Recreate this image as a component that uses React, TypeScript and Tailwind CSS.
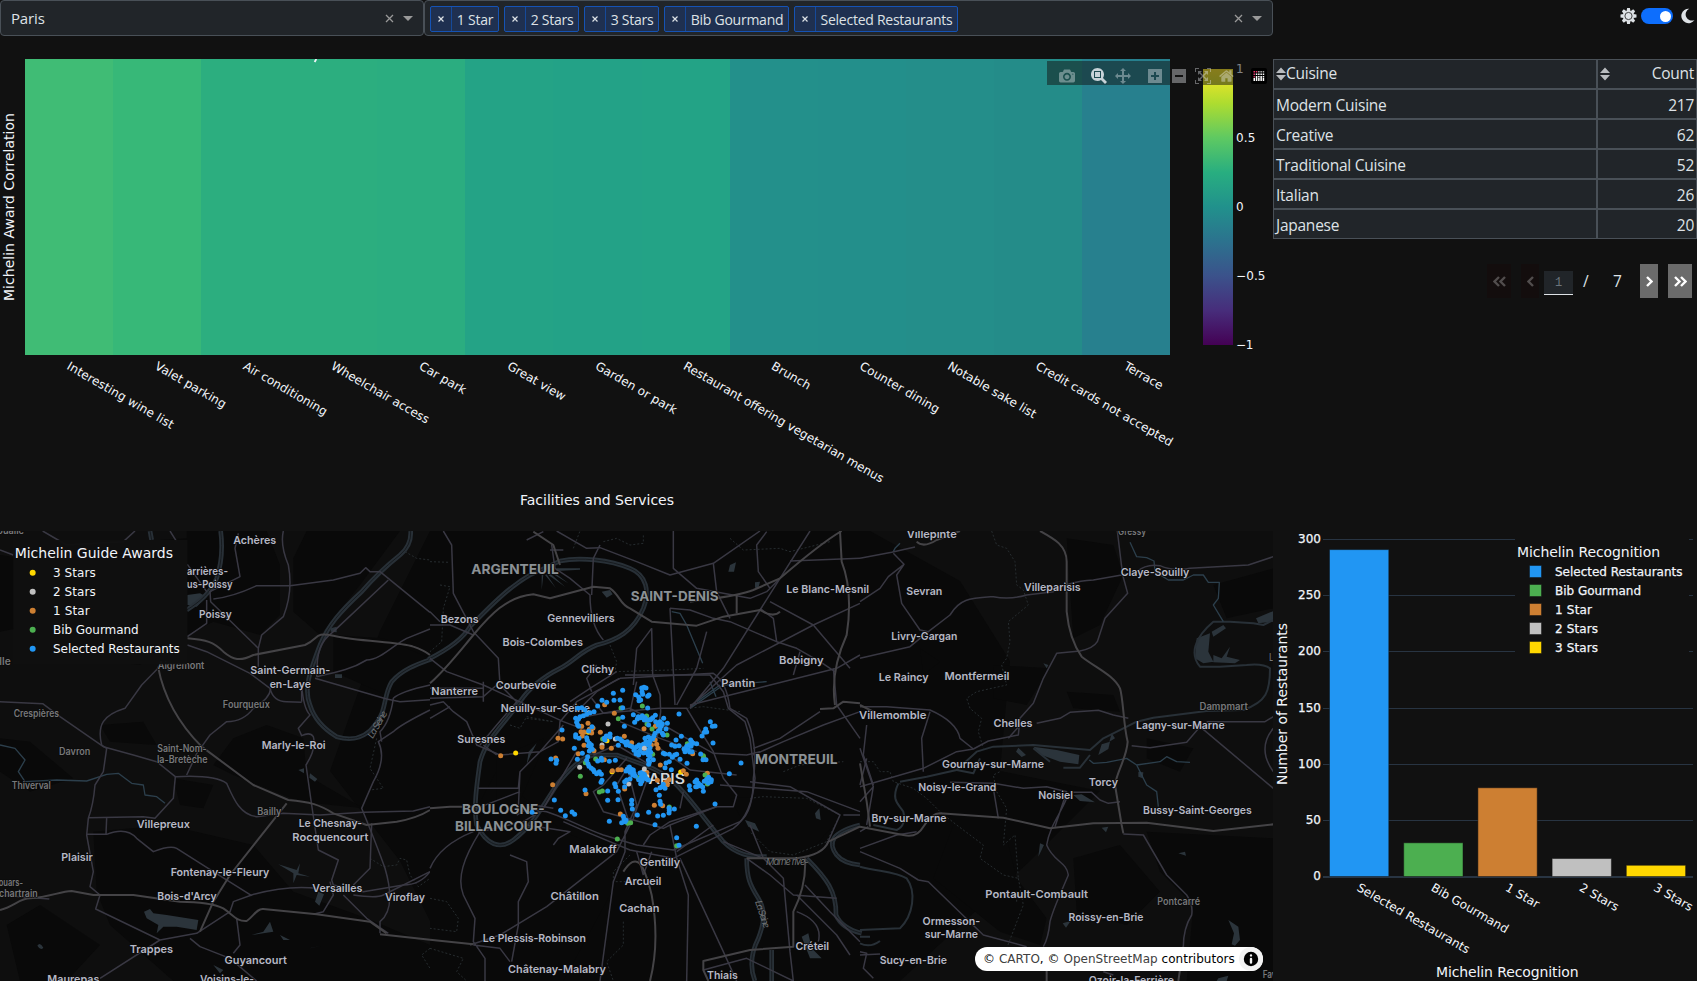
import React from "react";

const SANS = '"DejaVu Sans", Verdana, sans-serif';
const MAPFONT = 'Inter, "Open Sans", sans-serif';

/* ---------- header controls ---------- */

function Caret() {
  return <span className="h-0 w-0 border-x-[5px] border-t-[5px] border-x-transparent border-t-[#999]" />;
}

function ClearMark() {
  return (
    <svg width="9" height="9" viewBox="0 0 9 9" stroke="#999" strokeWidth="1.3">
      <path d="M1 1L8 8M8 1L1 8" />
    </svg>
  );
}

function Tag({ label, width }: { label: string; width: string }) {
  return (
    <div className={`flex h-[26px] shrink-0 rounded-[2px] border border-[#1553b5] bg-[#1f3050] ${width}`}>
      <div className="flex w-[21px] shrink-0 items-center justify-center border-r border-[#164a9a]">
        <svg width="6" height="6" viewBox="0 0 6 6" stroke="#dee2e6" strokeWidth="1.2">
          <path d="M.5 .5L5.5 5.5M5.5 .5L.5 5.5" />
        </svg>
      </div>
      <div className="flex flex-1 items-center justify-center whitespace-nowrap pt-px text-[14px] leading-none tracking-[-0.25px] text-[#dee2e6]">
        {label}
      </div>
    </div>
  );
}

function Header() {
  return (
    <div className="flex h-[36px] w-full">
      <div className="flex w-[424px] items-center rounded-[4px] border border-[#495057] bg-[#212529] px-[10px]">
        <span className="flex-1 text-[15px] tracking-[-0.15px] text-[#dee2e6]">Paris</span>
        <ClearMark />
        <span className="w-[9px]" />
        <Caret />
      </div>
      <div className="flex w-[849px] items-center gap-[5px] rounded-[4px] border border-[#495057] bg-[#212529] pt-[2px] pr-[10px] pl-[5px]">
        <Tag label="1 Star" width="w-[69px]" />
        <Tag label="2 Stars" width="w-[75px]" />
        <Tag label="3 Stars" width="w-[75px]" />
        <Tag label="Bib Gourmand" width="w-[125px]" />
        <Tag label="Selected Restaurants" width="w-[164px]" />
        <span className="flex-1" />
        <div className="flex items-center gap-[9px] pb-[2px]">
          <ClearMark />
          <Caret />
        </div>
      </div>
      <div className="flex flex-1 items-start justify-end pt-2 pr-[2px]">
        <svg width="17" height="16" viewBox="-8.5 -8 17 16" className="mr-1">
          {[0, 45, 90, 135, 180, 225, 270, 315].map((a) => (
            <path key={a} d="M-2 -4.8L-1.4 -8H1.4L2 -4.8Z" fill="#dee2e6" transform={`rotate(${a})`} />
          ))}
          <circle r="5.6" fill="#dee2e6" />
          <circle r="3.6" fill="none" stroke="#333" strokeWidth="0.9" />
        </svg>
        <div className="mr-2 flex h-4 w-8 items-center justify-end rounded-full bg-[#0d6efd] pr-[2.5px]">
          <div className="h-[11px] w-[11px] rounded-full bg-white" />
        </div>
        <svg width="14" height="16" viewBox="0 0 14 16">
          <path d="M8.2 .8A7.2 7.2 0 1 0 13.5 12A6.1 6.1 0 0 1 8.2 .8Z" fill="#dee2e6" />
        </svg>
      </div>
    </div>
  );
}

/* ---------- heatmap ---------- */

const CELLS: [string, string, number][] = [
  ["Interesting wine list", "#40bc75", 121],
  ["Valet parking", "#37b878", 80],
  ["Air conditioning", "#2cae7f", 95],
  ["Wheelchair access", "#2cae7f", 111],
  ["Car park", "#2bad80", 52],
  ["Great view", "#24a386", 65],
  ["Garden or park", "#23a287", 92],
  ["Restaurant offering vegetarian menus", "#23a386", 229],
  ["Brunch", "#23908b", 43],
  ["Counter dining", "#238f8b", 90],
  ["Notable sake list", "#248e8a", 100],
  ["Credit cards not accepted", "#248c89", 156],
  ["Terrace", "#27808e", 43],
];

const FLIP = "matrix(1 0 0 -1 0 850)";
const MODE_ICONS: { x: number; w: number; on?: boolean; d: string }[] = [
  {
    x: 1059,
    w: 1000,
    d: "m500 450c-83 0-150-67-150-150 0-83 67-150 150-150 83 0 150 67 150 150 0 83-67 150-150 150z m400 150h-120c-16 0-34 13-39 29l-31 93c-6 15-23 28-40 28h-340c-16 0-34-13-39-28l-31-94c-6-15-23-28-40-28h-120c-55 0-100-45-100-100v-450c0-55 45-100 100-100h800c55 0 100 45 100 100v450c0 55-45 100-100 100z m-400-550c-138 0-250 112-250 250 0 138 112 250 250 250 138 0 250-112 250-250 0-138-112-250-250-250z m365 380c-19 0-35 16-35 35 0 19 16 35 35 35 19 0 35-16 35-35 0-19-16-35-35-35z",
  },
  {
    x: 1091,
    w: 1000,
    on: true,
    d: "m1000-25l-250 251c40 63 63 138 63 218 0 224-182 406-407 406-224 0-406-182-406-406s183-406 407-406c80 0 155 22 218 62l250-250 125 125z m-812 250l0 438 437 0 0-438-437 0z m62 375l313 0 0-312-313 0 0 312z",
  },
  {
    x: 1115,
    w: 1000,
    d: "m1000 350l-187 188 0-125-250 0 0 250 125 0-188 187-187-187 125 0 0-250-250 0 0 125-188-188 186-187 0 125 252 0 0-250-125 0 187-188 188 188-125 0 0 250 250 0 0-126 187 188z",
  },
  {
    x: 1148,
    w: 875,
    d: "m1 787l0-875 875 0 0 875-875 0z m687-500l-187 0 0-187-125 0 0 187-188 0 0 125 188 0 0 187 125 0 0-187 187 0 0-125z",
  },
  { x: 1172, w: 875, d: "m0 788l0-876 875 0 0 876-875 0z m688-500l-500 0 0 125 500 0 0-125z" },
  {
    x: 1195,
    w: 1000,
    d: "m250 850l-187 0-63 0 0-62 0-188 63 0 0 188 187 0 0 62z m688 0l-188 0 0-62 188 0 0-188 62 0 0 188 0 62-62 0z m-875-938l0 188-63 0 0-188 0-62 63 0 187 0 0 62-187 0z m875 188l0-188-188 0 0-62 188 0 62 0 0 62 0 188-62 0z m-125 188l-1 0-93-94-156 156 156 156 92-93 2 0 0 250-250 0 0-2 93-92-156-156-156 156 94 92 0 2-250 0 0-250 0 0 93 93 157-156-157-156-93 94 0 0 0-250 250 0 0 0-94 93 156 157 156-157-93-93 0 0 250 0 0 250z",
  },
  {
    x: 1219,
    w: 928,
    d: "m786 296v-267q0-15-11-26t-25-10h-214v214h-143v-214h-214q-15 0-25 10t-11 26v267q0 1 0 2t0 2l321 264 321-264q1-1 1-4z m124 39l-34-41q-5-5-12-6h-2q-7 0-12 3l-386 322-386-322q-7-4-13-4-7 2-12 7l-35 41q-4 5-3 13t6 12l401 334q18 15 42 15t43-15l136-114v109q0 8 5 13t13 5h107q8 0 13-5t5-13v-227l122-102q5-5 6-12t-4-13z",
  },
];

const VIRIDIS = ["#fde725", "#addc30", "#5ec962", "#28ae80", "#21918c", "#2c728e", "#3b528b", "#472d7b", "#440154"];

function Heatmap() {
  const cw = 1145 / 13;
  return (
    <svg width="1273" height="472" viewBox="0 59 1273 472" fontFamily={SANS} fill="#f2f5fa" className="block shrink-0">
      <defs>
        <linearGradient id="viridis" x1="0" y1="0" x2="0" y2="1">
          {VIRIDIS.map((c, i) => (
            <stop key={c} offset={i / 8} stopColor={c} />
          ))}
        </linearGradient>
      </defs>
      <g shapeRendering="crispEdges">
        {CELLS.map(([n, c], i) => {
          const x0 = Math.round(25 + i * cw);
          const x1 = Math.round(25 + (i + 1) * cw);
          return <rect key={n} x={x0} y="59" width={x1 - x0} height="296" fill={c} />;
        })}
      </g>
      <path d="M316.3 59L314.6 62" stroke="#f2f5fa" strokeWidth="1.8" />
      {CELLS.map(([n, , w], i) => {
        const x = 66 + i * cw;
        return (
          <text key={n} x={x} y="368.5" fontSize="12" textLength={w} transform={`rotate(30 ${x} 368.5)`}>
            {n}
          </text>
        );
      })}
      <text x="520" y="505" fontSize="14" textLength="154">Facilities and Services</text>
      <text x="0" y="0" fontSize="14" textLength="188" transform="translate(14 301) rotate(-90)">Michelin Award Correlation</text>
      <rect x="1203" y="69" width="30" height="276" fill="url(#viridis)" />
      <g fontSize="12">
        <text x="1236" y="73">1</text>
        <text x="1236" y="142" textLength="19.5">0.5</text>
        <text x="1236" y="211">0</text>
        <text x="1236" y="280" textLength="29.5">−0.5</text>
        <text x="1236" y="349" textLength="17.5">−1</text>
      </g>
      <rect x="1047" y="61" width="223" height="24" fill="#111" fillOpacity="0.5" />
      {MODE_ICONS.map((ic) => (
        <svg key={ic.x} x={ic.x} y="68" width={(ic.w * 16) / 1000} height="16" viewBox={`0 0 ${ic.w} 1000`}>
          <path d={ic.d} transform={FLIP} fill="#f2f5fa" fillOpacity={ic.on ? 0.8 : 0.38} />
        </svg>
      ))}
      <g>
        <rect x="1251" y="68" width="16" height="16" rx="2" fill="#000" />
        {[0, 1, 2, 3, 4].map((i) => (
          <g key={i}>
            <rect x={1253.5 + i * 2.3} y={i % 2 ? 76 : 78} width="1.5" height={i % 2 ? 5 : 3} fill="#fff" />
            <rect x={1253.5 + i * 2.3} y="71" width="1.5" height="1.5" fill={i < 2 ? "#e8386d" : "#aaa"} />
            <rect x={1253.5 + i * 2.3} y="73.5" width="1.5" height="1.5" fill={i < 1 ? "#e8386d" : "#fff"} />
            {i % 2 === 0 && <rect x={1253.5 + i * 2.3} y="76" width="1.5" height="1.5" fill={i < 1 ? "#c9305e" : "#fff"} />}
          </g>
        ))}
      </g>
    </svg>
  );
}

/* ---------- cuisine table ---------- */

const ROWS: [string, number][] = [
  ["Modern Cuisine", 217],
  ["Creative", 62],
  ["Traditional Cuisine", 52],
  ["Italian", 26],
  ["Japanese", 20],
];

function SortIcon() {
  return (
    <svg width="10" height="14" viewBox="0 0 10 14" fill="#b9bcbf" className="shrink-0">
      <path d="M0 6L5 0.5L10 6ZM0 8L5 13.5L10 8Z" />
    </svg>
  );
}

function Chevrons({ double, left }: { double?: boolean; left?: boolean }) {
  return (
    <svg
      width={double ? 13 : 7}
      height="11"
      viewBox={double ? "0 0 13 11" : "0 0 7 11"}
      fill="none"
      stroke="currentColor"
      strokeWidth="2.4"
      className={left ? "-scale-x-100" : ""}
    >
      <path d="M1 1L5.5 5.5L1 10" />
      {double && <path d="M7 1L11.5 5.5L7 10" />}
    </svg>
  );
}

function CuisineTable() {
  const cell = "flex items-center border border-[#495057] bg-[#212529] px-[2px]";
  return (
    <div className="flex w-[424px] flex-col text-[15.5px] leading-none tracking-[-0.25px] text-[#dee2e6]">
      <div className="flex h-[30px]">
        <div className={`${cell} w-[324px]`}>
          <SortIcon />
          <span>Cuisine</span>
        </div>
        <div className={`${cell} w-[100px] justify-between`}>
          <SortIcon />
          <span>Count</span>
        </div>
      </div>
      {ROWS.map(([n, c]) => (
        <div key={n} className="flex h-[30px]">
          <div className={`${cell} w-[324px] pt-[3px]`}>{n}</div>
          <div className={`${cell} w-[100px] justify-end pt-[3px]`}>{c}</div>
        </div>
      ))}
      <div className="mt-[25px] flex h-[34px] items-center justify-end pr-[5px]">
        <div className="flex h-full w-6 items-center justify-center bg-[#130d0d] text-[#514d4d]">
          <Chevrons double left />
        </div>
        <div className="ml-[10px] flex h-full w-[18px] items-center justify-center bg-[#130d0d] text-[#514d4d]">
          <Chevrons left />
        </div>
        <div className="ml-[5px] mt-[4px] flex h-6 w-[29px] items-center justify-center border-b border-[#dee2e6] bg-[#212529] font-mono text-[12px] text-[#6c757d]">
          1
        </div>
        <span className="ml-[10px] w-[6px] pt-[1px]">/</span>
        <span className="ml-[24px] w-[9px] pt-[1px]">7</span>
        <div className="ml-[18px] flex h-full w-[18px] items-center justify-center bg-[#6b6b6b] text-white">
          <Chevrons />
        </div>
        <div className="ml-[10px] flex h-full w-6 items-center justify-center bg-[#6b6b6b] text-white">
          <Chevrons double />
        </div>
      </div>
    </div>
  );
}

/* ---------- map ---------- */

type Label = [string, number, number, number];

// Each tile is drawn on a 3x grid: [text, centre x, baseline y, width]
const TOWNS: Label[][] = [
  [
    ["Achères", 764, 57, 129], ["arrières-", 622, 150, 124], ["us-Poissy", 629, 190, 138], ["Poissy", 646, 279, 98],
    ["Saint-Germain-", 871, 448, 240], ["en-Laye", 871, 488, 124], ["Marly-le-Roi", 881, 672, 192],
    ["Villepreux", 490, 910, 160], ["Le Chesnay-", 991, 907, 190], ["Rocquencourt", 991, 947, 228],
    ["Plaisir", 231, 1009, 95], ["Fontenay-le-Fleury", 660, 1054, 296], ["Bois-d'Arcy", 561, 1126, 178],
    ["Versailles", 1012, 1102, 150], ["Viroflay", 1215, 1128, 120], ["Trappes", 454, 1284, 130],
    ["Guyancourt", 767, 1317, 187], ["Maurepas", 220, 1375, 156], ["Voisins-le-", 681, 1375, 162],
  ],
  [
    ["Bezons", 89, 295, 114], ["Gennevilliers", 453, 292, 202], ["Bois-Colombes", 338, 363, 241], ["Clichy", 503, 444, 98],
    ["Courbevoie", 288, 492, 182], ["Nanterre", 74, 511, 140], ["Neuilly-sur-Seine", 346, 562, 268], ["Suresnes", 154, 654, 144],
    ["Pantin", 925, 485, 102], ["Bobigny", 1114, 418, 134], ["Le Blanc-Mesnil", 1193, 204, 248], ["Malakoff", 489, 984, 142],
    ["Gentilly", 690, 1023, 121], ["Arcueil", 639, 1081, 110], ["Cachan", 628, 1160, 121], ["Châtillon", 434, 1126, 145],
    ["Le Plessis-Robinson", 313, 1250, 309], ["Châtenay-Malabry", 381, 1343, 294], ["Créteil", 1147, 1276, 101], ["Thiais", 877, 1361, 92],
  ],
  [
    ["Villepinte", 215, 38, 150], ["Sevran", 193, 210, 108], ["Villeparisis", 577, 199, 170], ["Claye-Souilly", 885, 154, 206],
    ["Livry-Gargan", 193, 346, 198], ["Le Raincy", 131, 469, 150], ["Montfermeil", 351, 466, 195], ["Villemomble", 98, 581, 202],
    ["Chelles", 459, 605, 117], ["Lagny-sur-Marne", 961, 612, 266], ["Gournay-sur-Marne", 399, 728, 306], ["Noisy-le-Grand", 292, 798, 234],
    ["Noisiel", 587, 821, 104], ["Torcy", 730, 783, 88], ["Bussy-Saint-Georges", 1012, 866, 326], ["Bry-sur-Marne", 147, 890, 225],
    ["Pontault-Combault", 530, 1118, 308], ["Ormesson-", 274, 1200, 173], ["sur-Marne", 274, 1239, 160], ["Roissy-en-Brie", 738, 1188, 225],
    ["Sucy-en-Brie", 160, 1316, 202], ["Ozoir-la-Ferrière", 814, 1376, 256],
  ],
];

const VILLAGES: Label[][] = [
  [
    ["ouaile", 32, 28, 80], ["ville", 2, 421, 60], ["Aigremont", 543, 433, 140], ["Fourqueux", 739, 548, 141], ["Crespières", 109, 576, 136],
    ["Davron", 224, 690, 94], ["Saint-Nom-", 546, 681, 148], ["la-Bretèche", 547, 713, 152], ["Thiverval", 94, 793, 117],
    ["Bailly", 808, 870, 72], ["Jouars-", 26, 1084, 86], ["chartrain", 55, 1116, 116],
  ],
  [],
  [["Gressy", 816, 31, 84], ["Dampmart", 1091, 556, 145], ["Pontcarré", 956, 1140, 128], ["Lesches", 1268, 408, 80], ["Favières", 1258, 1358, 100]],
];

const CITIES: Label[] = [
  ["ARGENTEUIL", 255, 147, 262], ["SAINT-DENIS", 734, 228, 264], ["MONTREUIL", 1099, 716, 248],
  ["BOULOGNE-", 220, 868, 248], ["BILLANCOURT", 220, 918, 290],
];

// Major motorways, local roads, rivers, streams and boundaries per tile
const TILES = [
  {
    major: [
      "M562 340C620 345 640 350 670 380C700 405 720 410 760 390L915 360C960 340 940 320 1000 332C1080 350 1200 350 1240 365Q1270 375 1290 390",
      "M474 425Q500 560 605 665L760 780L865 825C930 830 960 840 1000 865L1100 900L1190 890Q1250 880 1290 855",
      "M860 835L690 1050L640 1130L600 1220",
      "M0 1155C40 1145 60 1120 90 1120C150 1115 180 1100 215 1098L280 1110L400 1110L540 1130C600 1130 640 1135 670 1150C700 1170 710 1190 740 1188C760 1175 770 1150 790 1152L950 1168L1110 1190L1160 1225",
      "M1140 1228L1290 1244",
    ],
    local: [
      "M0 530L128 536L180 575L310 665L400 690L470 710L526 755C620 750 660 760 680 775C700 820 720 870 770 875L850 865L960 870L1090 862L1240 858L1290 845",
      "M474 430L425 480L375 550C310 570 290 600 305 660L320 670L310 740L285 780Q280 840 265 880L260 930L280 1040L270 1085L300 1110L287 1152L480 1245L590 1225L690 1160L700 1130L755 1110Q860 1080 950 1090",
      "M265 878L430 875L465 880L520 820L526 755M320 878L318 928M260 928L320 928Q380 905 410 940L460 980Q510 960 530 970L640 1040L755 1112",
      "M715 25L705 70L720 155L630 200L632 230L775 370L775 425M850 18Q840 60 865 120Q880 200 850 275L785 330L775 370",
      "M640 222Q700 215 770 182L870 182L1000 165L1080 145L1097 128L1110 140L1140 140L1290 262",
      "M128 18L200 60L370 50L405 18M510 18L530 50M0 75L40 90M562 360L620 380L750 445L810 490Q820 530 860 530L905 532",
      "M945 460L1160 522L1200 530L1290 524M950 455C950 380 960 350 1000 320L1165 165M950 455C1020 440 1060 430 1100 405C1140 405 1180 360 1220 340L1290 312",
      "M905 480Q910 550 930 570L895 610L905 632Q930 620 940 635Q950 670 918 720L935 840L955 975L1015 1005L995 1065L1000 1080L1090 1100L1210 1080Q1260 1080 1290 1040",
      "M562 335L620 295L620 225M562 118L620 200M605 665L630 630L680 590Q730 590 760 550Q810 520 812 490M600 665L560 750",
      "M1115 895L1110 1030L1060 1080M990 1070L1000 1110L970 1160L940 1168M1030 1110L1100 1180L1165 1225M1060 1110Q1130 1120 1150 1110L1290 1040M710 1180L720 1260L700 1285M570 1240L600 1265L690 1300L770 1368M480 1245L300 1360",
      "M1290 555Q1200 600 1180 620L1135 650Q1160 700 1120 770L1085 850Q1130 960 1155 1030Q1190 1150 1140 1190L1140 1225",
      "M1290 480Q1200 500 1180 520Q1170 590 1140 620L1145 650M0 1110L60 1115L148 1122M905 480L905 530",
    ],
    river: [
      "M1232 18Q1235 60 1200 90C1150 130 1120 160 1085 200C1020 260 985 300 960 360C930 440 910 490 930 540C945 590 985 620 1010 635C1060 650 1100 635 1125 600C1160 560 1150 510 1175 470C1210 430 1260 415 1295 402",
      "M662 18C670 80 660 130 650 160C630 205 600 230 560 255",
      "M450 18L455 45",
    ],
    stream: ["M0 660L45 670L75 705L55 740L75 770L170 765L260 768L320 748L355 745L395 775L430 780L435 810L470 815L495 835"],
    border: ["M1215 80L1250 100L1290 105M1130 640L1110 730L1150 790L1110 795M1110 1000L1150 1025L1190 1020L1200 1000L1220 1005L1230 1050L1255 1085L1290 1060M1290 1270L1265 1290L1290 1330"],
    lake: [
      "M432 1160L450 1152L460 1165L500 1170L595 1185L590 1215L530 1205L490 1205L470 1225L475 1200L440 1180Z",
      "M835 1018L890 1035L900 1015L895 1045L930 1055L890 1050L880 1075L880 1045Z",
      "M955 1100L972 1108L958 1142L945 1130ZM755 1230L790 1220L810 1190L820 1220L790 1225ZM640 1320L670 1335L660 1345ZM895 735L912 730L912 745ZM930 745L952 762L945 770L928 758ZM840 1230L870 1245L850 1245ZM930 1270L965 1262L935 1268ZM562 210L600 205L620 215L590 245L562 240ZM1005 448H1026V459H1005ZM992 310L1010 305V322L992 320ZM112 1262Q120 1250 130 1268Q122 1278 112 1262Z",
    ],
    green: [
      "M0 90L70 100L200 60L400 50L560 40L560 18L800 18L840 120L840 270L780 330L640 290L540 340L420 420L240 400L100 300L0 320Z",
      "M700 640L800 600L910 640L920 750L1090 850L900 830L700 750L640 720ZM920 18H1200L1080 180L960 330L880 260L880 100Z",
      "M1000 330L1150 340L1290 400L1160 510L1000 440Z",
      "M280 920L500 900L760 960L880 1100L1100 1180L1290 1260V1368H520L330 1200L290 1100ZM120 1140L300 1260L200 1368H60L20 1200Z",
      "M300 600L430 590L470 660L330 650ZM0 640L90 650L220 760L90 800L0 740ZM520 760L640 780L610 850L540 840Z",
    ],
  },
  {
    major: [
      "M0 475C50 430 80 390 130 330C180 270 230 215 310 208L360 220L490 185L540 190C570 210 570 240 600 250L665 290L800 302L880 275L990 255Q1030 280 1050 260",
      "M310 20L370 60L390 120M780 230C850 220 920 215 970 195L1050 160C1120 100 1180 50 1235 18M1230 18L1235 110Q1270 200 1250 330Q1200 440 1215 540M0 850L60 845L150 845",
      "M0 1244L130 1258M580 1040C620 980 640 1010 665 1110Q690 1250 660 1368M1290 535L1240 530L1210 550L1170 552M1125 1000Q1130 1080 1090 1160V1265L960 1275L820 1308L820 1335L835 1368M920 210V265",
      "M950 1000H1100Q1180 990 1195 950L1290 905",
    ],
    local: [
      "M570 460L850 445Q890 470 900 550L950 580Q985 660 970 760Q970 860 930 890L730 975L620 960L520 930C440 900 400 875 350 860L280 850M570 460L440 530L390 590L385 650L330 680",
      "M568 460L550 470L500 500L440 560M585 450H840L880 500L895 550L945 590L960 640L975 760Q965 870 910 910L730 1000L600 975L480 925L400 890",
      "M485 520L520 565L690 550L770 550L800 600L850 680L880 760L920 810L910 845L860 845L720 900L700 910L520 860L490 800L520 780L590 700",
      "M440 580L600 550L700 600L770 640L850 685L950 690L990 680M570 590L690 640L800 680M620 470L600 560M665 310L668 450L690 510L692 560L680 650M720 250L730 440L735 540",
      "M40 18L65 60L70 205L130 320L205 400L210 480L260 530L200 600L150 660M0 300L60 300L130 330M0 400L50 440L160 480L280 535L400 590L480 620",
      "M365 60L375 130L420 160L480 210Q480 300 520 345M510 60L490 100L485 210M380 18L470 70L510 68L620 110L720 150L850 115L990 18M730 18V130L800 190L960 220L1010 200L1050 160L1140 18",
      "M720 250L780 255L850 280L900 290L1040 350L1100 370L1170 410L1215 440M780 550L880 430L1050 160M780 545L920 420L1150 300L1290 235M780 540L1000 485L1220 430L1290 390",
      "M850 115L860 200L900 280M1010 20L980 60L985 140L1020 190M1290 100L1080 108M1020 230L1150 300L1260 430M990 250L1030 280L1040 350M1110 380L1090 450",
      "M0 540L40 530L70 560L110 590L140 660L210 690L330 680L400 600M0 520L160 515L200 480M330 680L270 740L265 790L145 790M270 740L265 850M140 850L270 800",
      "M490 690L560 660L660 720M590 720L620 840L585 920L585 980L550 1070L510 1368M660 740L610 880L560 980L350 1145L210 1230L120 1260",
      "M720 900L740 1000L775 1110L770 1368M750 1000L880 1280L920 1368M665 980L640 1050M620 980L640 1050",
      "M150 920C100 1000 80 1060 100 1110L135 1180L130 1250L165 1300V1368M130 1260L210 1270L240 1310M240 990L290 1010L295 1070L265 1130V1200L245 1310M0 1030Q30 960 130 920",
      "M290 900L420 920L385 940L370 960M370 850L310 840L260 870M150 920L280 890L330 860M0 490H160M160 470L160 530",
      "M950 1000L1020 1050L1090 1110L1220 1120M1000 1000L1060 1060L1080 1280L1090 1368M1100 1110L1220 1230L1260 1290M1125 1080L1200 1160L1290 1250M1100 1160Q1180 1190 1165 1250M820 1335L950 1300L1090 1368",
      "M870 780L1130 800L1290 860M960 770L1080 785L1230 870L1190 960M970 670L1050 640L1170 560M1210 430L1220 540L1290 640M970 690L1060 650L1180 600L1290 560M960 900L1000 1000L880 950M1240 870L1290 870",
      "M610 480L620 370L665 310M485 500L470 460L500 420M560 440L480 490L420 530M830 320L800 430L740 540M750 850L760 800M0 580L60 545M160 660L200 690M440 680L340 850",
      "M585 740L560 780L600 900M640 960L660 930L720 890L860 845M850 900L740 980M920 750L780 735L660 650",
      "M290 45L340 20M360 75L400 75M0 260L30 290",
    ],
    river: [
      "M-5 403C60 370 100 340 120 305C170 255 230 190 300 150L390 108C450 95 540 105 600 130C650 150 660 200 640 250C610 320 560 345 500 360C450 380 430 410 390 430C330 460 290 500 270 530C220 600 170 640 150 710C140 780 130 850 140 900C170 960 210 975 250 945C310 900 340 840 380 780C420 730 450 700 490 690L560 690C640 720 690 730 740 780C780 820 830 890 880 950C920 990 960 995 1010 995",
      "M950 1000C950 1060 960 1080 985 1120C1010 1160 1000 1200 985 1240C960 1290 960 1330 975 1368M1025 1275V1368",
      "M1130 1000C1190 1060 1220 1100 1218 1170Q1235 1210 1295 1225M1290 900C1210 920 1190 950 1220 990Q1240 1015 1290 1020",
    ],
    stream: ["M725 260L750 265L770 300L818 415M780 550L880 480L1010 470M840 470L858 515M870 480L800 530"],
    border: [
      "M0 110L60 112M30 180L60 185L40 250L35 350L0 380M430 70L450 18M520 50L560 40L600 60L640 55V30M900 40L940 75L1050 70L1080 80L1200 50M540 360L560 410L555 440L720 435L820 430",
      "M960 820L1000 815L1130 820L1230 870L1190 950L1090 990L1020 980L960 920M1060 740L1110 720L1240 710M0 1120L50 1130L85 1180L80 1220L0 1210M580 1190V1260L530 1310L550 1368M600 990L550 1040V1070H620M0 1270L100 1300L80 1340L110 1368M290 580L370 590L290 575L270 610L240 600M770 550L820 545L930 560",
    ],
    lake: [
      "M515 200L540 195L548 208L530 218ZM895 140L900 120L918 112L912 140ZM975 172L990 170L985 190L975 188ZM1155 865L1168 850L1172 885L1158 880ZM945 885L975 895L988 920L955 905ZM290 718L296 680L320 655L302 690ZM1115 1235L1135 1225L1145 1270L1175 1300L1140 1300ZM335 150V195L340 150ZM345 150L378 190L350 148ZM355 150L405 185L360 145ZM365 145L415 175L370 140ZM380 130L450 130V134L380 138Z",
    ],
    green: [
      "M0 850L140 850L220 700L240 780L400 920L600 1000L400 1368H0Z",
      "M200 700L340 640L330 690L260 850L200 850ZM900 820L1160 810L1230 880L1130 990L990 980Z",
    ],
  },
  {
    major: [
      "M540 18C580 40 620 60 620 110V260C625 310 640 360 665 395C710 430 760 450 780 490C790 520 790 600 803 650C800 700 770 740 765 780L785 900L790 925",
      "M170 50Q190 70 230 45L300 18M0 905L130 930Q170 940 190 905Q215 865 240 865L430 878L570 910L700 895L860 893L1060 918L1240 898M0 715L20 830L30 905M0 540L40 560",
      "M560 1310V1368M970 1265L955 1368",
    ],
    local: [
      "M0 100L95 82L165 66M205 320L270 270C300 220 330 220 400 215Q450 225 500 210L580 200Q620 170 700 165L785 150L830 140Q860 115 900 122Q940 140 990 130L1165 120L1240 95",
      "M0 400L150 365L205 320L180 315L125 235L110 150L132 118L100 85M0 230L60 190L85 155L132 118M772 18L788 150L803 205L735 280L712 350Q700 370 660 378L590 385L550 460L520 535L480 580L475 630L385 648L340 672L290 680L190 730L0 785",
      "M0 545L80 545L210 555Q290 590 300 640L340 672M530 595L600 580L630 562L715 556L760 570L805 580M210 560L185 640L190 740M1040 590L1215 590L1240 575M815 662L870 668L980 652L1020 605L1240 790",
      "M270 772L400 775L490 790L560 785L620 800L585 905M620 820C600 870 570 900 560 960C580 1010 620 1010 625 1050C600 1110 580 1150 570 1190Q565 1240 550 1265M400 790L415 880M0 970L110 930L170 920M640 802L695 802L720 825L745 835L780 830",
      "M0 980L120 1030L175 1065L205 1070L370 1230L500 1265M790 927L850 930L920 1050L980 1110Q1000 1140 995 1170Q970 1210 970 1265M0 670L40 785L20 900M0 830L40 785M445 640L480 600M1240 610Q1190 670 1240 740",
      "M0 1280L20 1285L10 1330L40 1360M730 1340L760 1350M0 1290L60 1287",
      "M20 600L10 690L40 780M0 780L20 700M25 905L0 920",
    ],
    river: [
      "M120 770L200 755L290 735L350 680L400 665L520 660L690 675L730 640L790 610L830 590L880 578L1040 558L1150 555C1220 530 1230 500 1230 430Q1210 415 1160 420L1080 425L1020 425C990 390 1000 340 1060 290L1110 290L1180 295L1210 300L1240 285",
      "M115 775C90 830 120 840 130 860Q140 900 110 915L40 900M0 1025C60 1040 110 1040 140 1060C170 1100 160 1170 120 1210L0 1215M0 1235H30M0 1255Q30 1270 60 1248",
      "M290 735L340 745L360 700M520 670L570 710M610 728H660L690 690",
    ],
    stream: ["M810 52L830 95L860 98L882 108L885 140L925 165L970 165L1000 150L1030 150L1045 172L1078 172L1075 220L1060 240L1090 290M688 705L700 715L740 712L800 700L830 720L900 710L920 695L950 710L990 712M830 720L860 780L890 800L895 845M100 80L105 70L120 55"],
    border: [
      "M395 18L410 60L440 70L465 110L470 180L490 195L505 240L445 290L450 350L440 400L425 420L440 480L350 500L320 520L330 550L365 580L355 620L370 670M0 710L40 710L60 740L90 740L100 770L160 790L200 820L240 860L290 900L370 960L360 1000L430 1050L475 1060L465 930L430 960L440 850L410 800L400 750L420 740M475 1060L490 1140L440 1270M470 1100V1130",
    ],
    lake: [
      "M1010 340L1050 325L1045 380L1060 410L1030 415L1005 400ZM1060 390L1085 400L1110 365L1100 395L1140 405L1125 415L1060 412ZM1055 320L1090 300L1098 310L1060 335ZM1188 280L1240 258V290L1195 295Z",
      "M520 665L590 675L658 690L655 718L600 710L545 690ZM475 668L498 690L485 696L468 680ZM715 690L725 658L750 650L745 672ZM748 650L755 625L765 640ZM640 810L665 808L705 832L660 828ZM725 908L745 905L738 922ZM835 740L850 742L848 760L835 755ZM535 995L540 955L552 960ZM955 985L975 980L978 992ZM608 1195L632 1188L618 1208ZM1105 1185L1135 1205L1140 1245L1125 1262L1115 1258L1122 1225ZM550 415L565 420L560 430ZM1075 1360L1105 1352L1100 1368H1070Z",
    ],
    green: [
      "M180 370L240 410L190 450ZM620 40L760 60L790 150L720 300L640 340ZM400 420L570 430L500 540L400 520ZM860 640L1000 670L960 740L860 700ZM860 920L1240 940V1368H980L1000 1140L900 1040ZM620 500L760 510L780 560L640 550ZM1060 180L1240 130V250L1100 280Z",
      "M280 900L430 900L470 1060L560 1180L540 1260L420 1220L220 1060ZM640 1000L780 960L900 1100L800 1200L650 1160Z",
    ],
  },
];

const pts = (s: string) => s.trim().split(/\s+/).map((p) => p.split(",").map(Number));

const DOTS: [string, string][] = [
  ["#ffd700", "257,684 531,647 475,622 752,741 546,740"],
  ["#c0c0c0", "534,597 483,615 556,642 516,660 449,727 596,777"],
  [
    "#cd7f32",
    "524,539 553,565 474,595 455,604 489,609 478,613 485,624 462,622 457,633 453,620 384,640 398,642 462,661 445,686 377,699 212,692 511,622 583,634 516,667 544,670 605,653 598,658 492,677 675,645 680,658 684,670 676,604 642,611 664,660 788,686 691,720 547,737 564,734 574,734 523,704 368,779 468,806 584,792 571,867 673,841 698,842 717,764 708,772 712,779 682,766 760,737 769,748 832,745 650,742",
  ],
  [
    "#4caf50",
    "573,549 565,581 637,543 650,573 651,597 666,612 711,630 772,656 820,692 821,697 466,713 497,702 451,754 508,801 517,798 718,846 593,895 602,893 562,942 740,962 825,750 832,777 668,688 624,758 518,642",
  ],
  [
    "#2196f3",
    "578,496 550,505 552,526 570,525 516,526 530,532 503,543 455,548 444,550 465,555 492,560 480,563 470,568 460,572 450,575 445,583 437,580 440,592 443,600 446,604 578,548 578,577 583,604 642,487 648,489 635,489 636,500 638,508 617,509 657,510 653,514 626,516 632,525 627,527 653,549 747,567 610,569 625,575 632,578 637,572 643,585 622,582 614,592 645,578 652,585 660,585 676,571 668,578 663,583 701,580 690,590 712,595 697,596 685,600 677,590 708,612 694,603 690,612 685,618 697,625 700,630 656,600 841,590 855,603 847,604 827,612 823,622 830,621 816,633 754,634 849,654 396,615 486,605 476,618 437,629 437,636 447,640 470,638 472,646 478,655 484,660 482,668 475,662 487,673 478,678 433,670 457,685 363,702 380,706 378,715 442,703 523,640 529,633 525,645 540,627 540,636 562,640 570,642 575,647 565,661 584,652 592,650 589,660 600,662 607,665 613,672 620,665 627,660 633,668 625,680 618,686 630,678 640,684 626,690 612,676 645,640 655,636 662,640 672,633 668,642 660,648 648,650 650,660 658,655 640,658 660,668 655,675 650,683 662,682 655,690 660,695 655,705 658,712 656,718 670,704 675,625 738,645 725,660 735,664 747,662 762,672 765,680 770,664 778,660 785,650 782,645 790,655 800,656 783,664 775,675 786,680 779,681 767,675 700,685 705,687 718,688 734,690 740,688 727,697 750,703 708,714 718,710 705,728 724,734 771,715 812,687 819,704 828,704 933,714 898,746 800,765 795,770 805,775 812,780 800,785 818,786 820,799 797,785 778,782 780,795 823,769 830,763 836,757 844,764 843,770 835,774 808,782 470,706 474,716 477,724 484,730 490,734 493,740 500,746 508,740 514,748 513,772 516,766 503,708 516,706 538,709 556,706 514,700 473,695 598,726 604,733 592,732 588,738 610,735 600,742 612,745 608,750 616,753 630,744 637,742 643,748 634,755 640,760 650,762 645,755 655,765 626,764 636,768 632,776 554,776 557,785 565,799 584,770 590,765 584,785 600,762 678,794 688,811 696,785 700,778 690,788 705,790 465,795 533,798 533,826 564,824 373,825 392,856 406,872 426,861 434,868 605,826 605,838 607,852 622,870 538,889 575,893 582,882 588,886 580,874 585,890 690,829 692,838 656,862 683,873 700,871 717,849 718,856 717,864 733,852 675,899 855,837 799,904 740,938 747,961 306,862",
  ],
  ["#c0c0c0", "643,670 643,732"],
];

const LEGEND: [string, string, number][] = [
  ["3 Stars", "#ffd700", 128],
  ["2 Stars", "#c0c0c0", 128],
  ["1 Star", "#cd7f32", 110],
  ["Bib Gourmand", "#4caf50", 257],
  ["Selected Restaurants", "#2196f3", 380],
];

function MapTexts({ items, size, fill, weight = 600 }: { items: Label[]; size: number; fill: string; weight?: number }) {
  return (
    <g
      fontFamily={MAPFONT}
      fontSize={size}
      fontWeight={weight}
      fill={fill}
      textAnchor="middle"
      stroke="#0b0b0b"
      strokeWidth="5"
      strokeLinejoin="round"
      paintOrder="stroke"
    >
      {items.map(([t, x, y, w]) => (
        <text key={t} x={x} y={y} textLength={w} lengthAdjust="spacingAndGlyphs">
          {t}
        </text>
      ))}
    </g>
  );
}

function ParisMap() {
  return (
    <div className="relative h-[450px] w-[1273px] shrink-0 overflow-hidden bg-[#0e0e0e]">
      <svg width="1273" height="450" viewBox="0 0 1273 450" className="block">
        <path
          d="M430 0H870L960 50L1010 130L1000 240L1100 260L1030 330L900 450H460L400 330L330 240L380 100Z"
          fill="#090909"
        />
        {TILES.map((t, i) => (
          <g key={i} transform={`translate(${i * 430} -6) scale(${1 / 3})`} fill="none" strokeLinejoin="round">
            {t.green.map((d) => <path key={d} d={d} fill="#090909" />)}
            {t.lake.map((d) => <path key={d} d={d} fill="#2b343b" />)}
            {t.river.map((d) => <path key={d} d={d} stroke="#283037" strokeWidth={i === 2 ? 6 : 14} />)}
            {i < 2 && t.river.map((d) => <path key={d + "i"} d={d} stroke="#171b1f" strokeWidth="3" />)}
            {t.stream.map((d) => <path key={d} d={d} stroke="#2c3f4c" strokeWidth="4" />)}
            {t.border.map((d) => <path key={d} d={d} stroke="#262c2f" strokeWidth="3" strokeDasharray="6 6" />)}
            {t.local.map((d) => <path key={d} d={d} stroke="#393843" strokeWidth="4.5" />)}
            {t.major.map((d) => <path key={d} d={d} stroke="#444346" strokeWidth="6" />)}
          </g>
        ))}
        {TILES.map((_, i) => (
          <g key={i} transform={`translate(${i * 430} -6) scale(${1 / 3})`}>
            <MapTexts items={VILLAGES[i]} size={29} fill="#77787a" />
            <MapTexts items={TOWNS[i]} size={33} fill="#b6b8c5" />
          </g>
        ))}
        <g transform={`translate(430 -6) scale(${1 / 3})`}>
          <MapTexts items={CITIES} size={41} fill="#8b9195" weight={700} />
          <MapTexts items={[["PARIS", 697, 777, 136]]} size={42} fill="#d5d8da" />
          <g fontFamily={MAPFONT} fontSize="28" fontStyle="italic" fill="#6f7275">
            <text transform="translate(975 1130) rotate(72)" textLength="86">La Seine</text>
            <text x="1008" y="1021" textLength="128">Marne rive-</text>
            <text transform="translate(-172 642) rotate(-60)" textLength="90">La Seine</text>
          </g>
          {DOTS.map(([c, s], k) => (
            <g key={k} fill={c}>
              {pts(s).map(([x, y], j) => (
                <circle key={j} cx={x} cy={y} r="7.5" />
              ))}
            </g>
          ))}
        </g>
        <g transform={`translate(0 -6) scale(${1 / 3})`} fontFamily={SANS} fill="#f2f5fa">
          <rect x="40" y="45" width="522" height="373" fill="#101010" fillOpacity="0.96" />
          <text x="44" y="98" fontSize="42" textLength="475">Michelin Guide Awards</text>
          {LEGEND.map(([t, c, w], i) => (
            <g key={t}>
              <circle cx="98" cy={143.5 + i * 57} r="9" fill={c} />
              <text x="159" y={155 + i * 57} fontSize="36" textLength={w}>
                {t}
              </text>
            </g>
          ))}
        </g>
      </svg>
      <div className="absolute top-[416px] left-[975px] flex h-6 w-[288px] items-center justify-between rounded-full bg-white pl-2 [font-family:'DejaVu_Sans',Verdana,sans-serif] text-[12px] text-black">
        <span className="whitespace-nowrap tracking-[0.03px]">
          © <span className="text-[#404040]">CARTO</span>, © <span className="text-[#404040]">OpenStreetMap</span> contributors
        </span>
        <span className="flex h-6 w-6 shrink-0 items-center justify-center rounded-full bg-[#f2f2f2]">
          <svg width="24" height="24" viewBox="0 0 20 20" fillRule="evenodd">
            <path d="M4 10a6 6 0 1 0 12 0 6 6 0 1 0-12 0m5-3a1 1 0 1 0 2 0 1 1 0 1 0-2 0m0 3a1 1 0 1 1 2 0v3a1 1 0 1 1-2 0" />
          </svg>
        </span>
      </div>
    </div>
  );
}

/* ---------- bar chart ---------- */

const BARS: [string, string, number, number][] = [
  ["Selected Restaurants", "#2196f3", 291, 128],
  ["Bib Gourmand", "#4caf50", 30, 87],
  ["1 Star", "#cd7f32", 79, 37],
  ["2 Stars", "#c0c0c0", 16, 43],
  ["3 Stars", "#ffd700", 10, 43],
];

function BarChart() {
  const y = (v: number) => 876.5 - (v * 337) / 300;
  return (
    <svg width="424" height="450" viewBox="1273 531 424 450" fontFamily={SANS} fill="#f2f5fa" className="block shrink-0">
      {[50, 100, 150, 200, 250, 300].map((v) => (
        <path key={v} d={`M1323 ${Math.floor(y(v)) + 0.5}H1693`} stroke="#283442" strokeWidth="1" />
      ))}
      <path d="M1323 877H1693" stroke="#283442" strokeWidth="2" />
      <g stroke="#f2f5fa" strokeWidth="0.25">
        {[0, 50, 100, 150, 200, 250, 300].map((v) => (
          <text key={v} x="1321" y={y(v) + 3.5} fontSize="12" textAnchor="end">
            {v}
          </text>
        ))}
      </g>
      {BARS.map(([n, c, v, w], i) => {
        const x = 1329.5 + i * 74.2;
        const tx = 1356 + i * 74.2;
        return (
          <g key={n}>
            <rect x={x} y={y(v)} width="59.3" height={876.5 - y(v)} fill={c} stroke="#111" strokeOpacity="0.5" strokeWidth="1" />
            <text x={tx} y="890" fontSize="12" textLength={w} transform={`rotate(30 ${tx} 890)`}>
              {n}
            </text>
          </g>
        );
      })}
      <rect x="1515" y="537" width="174" height="122" fill="#111" />
      <text x="1517" y="557" fontSize="14" textLength="143">Michelin Recognition</text>
      {BARS.map(([n, c], i) => (
        <g key={n}>
          <rect x="1529.5" y={565.5 + i * 19} width="12" height="12" fill={c} stroke="#111" strokeOpacity="0.5" />
          <text x="1555" y={575.7 + i * 19} fontSize="12" textLength={[127.5, 86, 37, 43, 43][i]} stroke="#f2f5fa" strokeWidth="0.25">
            {n}
          </text>
        </g>
      ))}
      <text x="1436" y="977" fontSize="14" textLength="142.5">Michelin Recognition</text>
      <text fontSize="14" textLength="162" transform="translate(1287 785) rotate(-90)">Number of Restaurants</text>
    </svg>
  );
}

export default function App() {
  return (
    <div className="flex h-[981px] w-[1697px] flex-col overflow-hidden bg-[#111] [font-family:'Open_Sans','Noto_Sans',sans-serif]">
      <Header />
      <div className="mt-[23px] flex h-[472px]">
        <Heatmap />
        <CuisineTable />
      </div>
      <div className="flex h-[450px]">
        <ParisMap />
        <BarChart />
      </div>
    </div>
  );
}
